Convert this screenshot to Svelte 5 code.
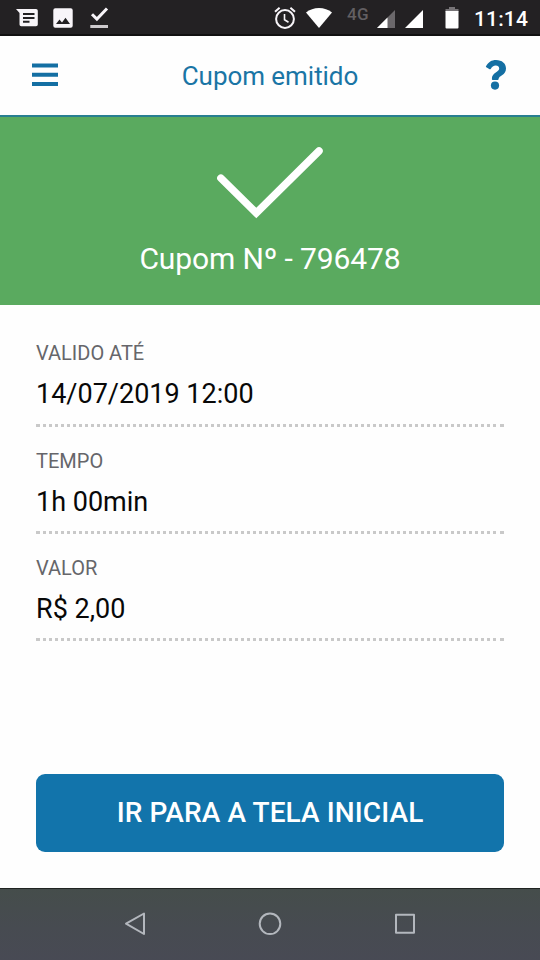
<script>
  const fields = [
    { label: 'VALIDO ATÉ', value: '14/07/2019 12:00' },
    { label: 'TEMPO', value: '1h 00min' },
    { label: 'VALOR', value: 'R$ 2,00' }
  ];
</script>

<div class="screen">
  <div class="status">
    <div class="notifications">
      <svg width="22" height="20" viewBox="0 0 22 20">
        <path fill="#f8f5f9" fill-rule="evenodd" d="M0 1h20a1.800 1.800 0 0 1 1.800 1.800v13.600a1.800 1.800 0 0 1-1.800 1.800H5.300A1.800 1.800 0 0 1 3.500 16.400V5zM7 5v2h11.500V5zm0 3.900v2h11.500v-2zm0 3.900v2h6.500v-2z" />
      </svg>
      <svg width="20" height="20" viewBox="0 0 20 20">
        <path fill="#f8f5f9" fill-rule="evenodd" d="M2.300.2h15.400a2 2 0 0 1 2 2v15.600a2 2 0 0 1-2 2H2.300a2 2 0 0 1-2-2V2.200a2 2 0 0 1 2-2zM3 16h14l-4.500-6.200-3.500 4.700-2.500-3z" />
      </svg>
      <svg width="20" height="22" viewBox="0 0 20 22">
        <path d="M2 7.200l4.900 4.800L17 1.500" fill="none" stroke="#f8f5f9" stroke-width="3" />
        <path d="M.3 18h17.700v3H.3z" fill="#cdcacd" />
      </svg>
    </div>
    <div class="system">
      <svg class="alarm" width="22" height="24" viewBox="0 0 22 24" fill="none" stroke="#f8f5f9">
        <circle cx="11" cy="13" r="8.900" stroke-width="2" />
        <path d="M1 5.700l4.600-4M16.400 1.700l4.600 4" stroke-width="2" />
        <path d="M10.500 8v5.700l4 2.500" stroke-width="1.600" />
      </svg>
      <svg class="wifi" width="28" height="22" viewBox="0 0 28 22">
        <path d="M1 5.500C8-.5 20-.5 27 5.500L14 21z" fill="#fff" />
      </svg>
      <span class="network">4G</span>
      <svg class="sim-one" width="20" height="20" viewBox="0 0 20 20">
        <path d="M19 1v18H1z" fill="#6b686b" />
        <path d="M11.500 8.500V19H1z" fill="#fff" />
      </svg>
      <svg class="sim-two" width="20" height="20" viewBox="0 0 20 20">
        <path d="M19 1v18H1z" fill="#fff" />
      </svg>
      <svg class="battery" width="14" height="24" viewBox="0 0 14 24">
        <path d="M4 1h6v2h3.500v3H.5V3H4z" fill="#777477" />
        <path d="M.5 5h13v16.500a1 1 0 0 1-1 1h-11a1 1 0 0 1-1-1z" fill="#fff" />
      </svg>
      <span class="clock">11:14</span>
    </div>
  </div>

  <header>
    <svg class="menu" width="26" height="24" viewBox="0 0 26 24">
      <path d="M0 .5h26v4H0zM0 9.800h26v4H0zM0 19h26v4H0z" fill="#146fa3" />
    </svg>
    <h1>Cupom emitido</h1>
    <svg class="help" width="22" height="32" viewBox="0 0 22 32">
      <path d="M1 7.200C3.500 3 6.500 1 11 1C17 1 21 4.500 21 9.500C21 16.500 13.800 16.300 13.500 20.200Q13.500 21 12.700 21H7.700Q6.900 21 6.900 20.200C6.700 13.500 14.200 13.200 14.200 9.600C14.200 7.500 12.700 6.600 10.800 6.600C8.300 6.600 7 8.300 5.700 9.900Q5 10.600 4.200 10L1.300 8.300Q.6 7.800 1 7.200z" fill="#146fa3" />
      <circle cx="10" cy="26.600" r="4.100" fill="#146fa3" />
    </svg>
  </header>

  <section class="banner">
    <svg width="108" height="74" viewBox="0 0 108 74">
      <path d="M4.900 32.200L40.300 67L103 5" fill="none" stroke="#fff" stroke-width="7.500" stroke-linecap="round" />
    </svg>
    <p>Cupom Nº - 796478</p>
  </section>

  <main>
    {#each fields as field}
      <div class="field">
        <span class="label">{field.label}</span>
        <span class="value">{field.value}</span>
      </div>
    {/each}
    <button>IR PARA A TELA INICIAL</button>
  </main>

  <nav>
    <svg width="24" height="26" viewBox="0 0 24 26"><path d="M21 2.500v20.500L3 12.700z" /></svg>
    <svg width="24" height="26" viewBox="0 0 24 26"><circle cx="12" cy="12.800" r="10.300" /></svg>
    <svg width="24" height="26" viewBox="0 0 24 26"><path d="M3 3.800h18v18H3z" /></svg>
  </nav>
</div>

<style>
  :global(body) { background: #fff; overflow: hidden; }
  .screen {
    width: 540px;
    height: 960px;
    display: flex;
    flex-direction: column;
    background: #fefefe;
    font-family: Roboto, sans-serif;
  }
  svg { display: block; flex: none; }
  .status {
    box-sizing: border-box;
    height: 36px;
    flex: none;
    display: flex;
    justify-content: space-between;
    padding: 0 12px 0 16px;
    background: #232123;
    border-bottom: 2px solid #111;
  }
  .notifications { display: flex; align-items: flex-start; gap: 15px; padding-top: 8px; }
  .notifications svg:last-child { margin: -1px 0 0 2px; }
  .system { display: flex; align-items: flex-start; }
  .alarm { margin-top: 6px; }
  .wifi { margin: 7px 14px 0 9px; }
  .network { width: 24px; font-size: 17px; line-height: 20px; font-weight: 500; color: #625f62; margin-top: 4px; letter-spacing: .4px; }
  .sim-one { margin: 9px 8px 0 5px; }
  .sim-two { margin-top: 9px; }
  .battery { margin: 6px 15px 0 21px; }
  .clock { font-size: 21px; line-height: 24px; font-weight: 500; letter-spacing: .15px; color: #fff; margin-top: 7px; white-space: nowrap; }
  header {
    box-sizing: border-box;
    height: 81px;
    flex: none;
    display: flex;
    align-items: flex-start;
    justify-content: space-between;
    padding: 0 33px 0 32px;
    border-bottom: 2px solid #287f91;
  }
  .menu { margin-top: 27px; }
  h1 { margin: 24px 3px 0 0; font-size: 26px; line-height: 32px; font-weight: 400; letter-spacing: -.05px; color: #1a75a5; }
  .help { margin-top: 23px; }
  .banner {
    height: 188px;
    flex: none;
    display: flex;
    flex-direction: column;
    align-items: center;
    background: #5aaa5f;
    color: #fff;
  }
  .banner svg { margin-top: 29px; }
  .banner p { margin: 21px 0 0; font-size: 30px; line-height: 36px; letter-spacing: -.12px; }
  main { flex: 1; display: flex; flex-direction: column; padding: 14px 36px 36px; }
  .field {
    box-sizing: border-box;
    height: 107px;
    display: flex;
    flex-direction: column;
    padding-top: 22px;
    border-bottom: 3px dotted #c9c9c9;
  }
  .field:first-child { height: 108px; }
  .label { font-size: 20px; line-height: 24px; color: #66666a; }
  .value { margin-top: 13px; font-size: 27px; line-height: 32px; color: #080808; }
  button {
    height: 78px;
    margin-top: auto;
    padding: 0;
    border: 0;
    border-radius: 9px;
    background: #1274ab;
    color: #fff;
    font: 500 28px/32px Roboto, sans-serif;
    letter-spacing: .1px;
  }
  nav {
    box-sizing: border-box;
    height: 72px;
    flex: none;
    display: flex;
    justify-content: center;
    gap: 111px;
    padding-top: 22px;
    border-top: 1px solid #202422;
    background: linear-gradient(#454d4b, #474b51 55%, #484a54);
  }
  nav svg { fill: none; stroke: #b3b7bd; stroke-width: 2; stroke-linejoin: round; }
</style>
